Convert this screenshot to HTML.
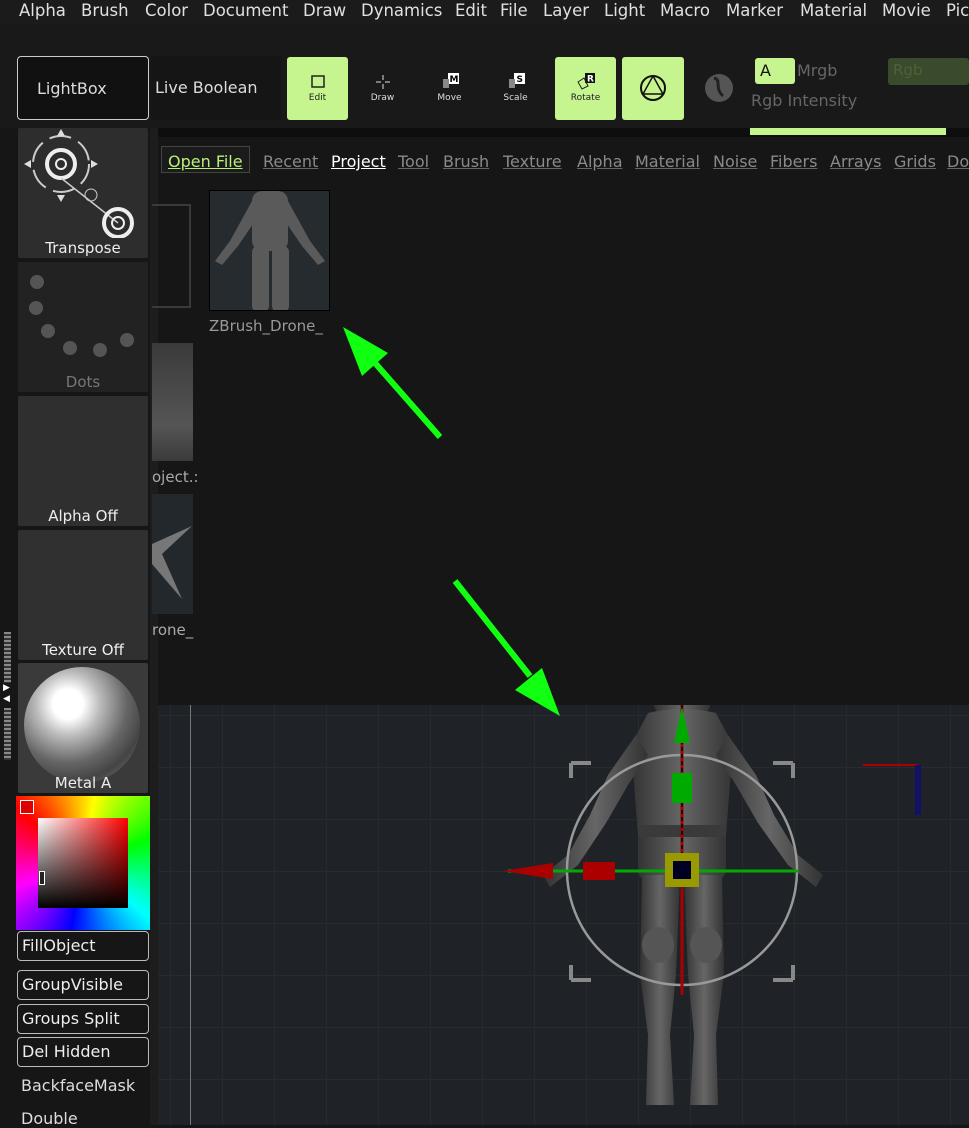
<!DOCTYPE html>
<html><head><style>
*{margin:0;padding:0;box-sizing:border-box}
body{width:969px;height:1125px;background:#161616;position:relative;overflow:hidden;font-family:"DejaVu Sans","Liberation Sans",sans-serif;color:#ddd}
.a{position:absolute}
.menu{top:0;left:0;width:969px;height:24px;background:#1b1b1b}
.menu span{position:absolute;top:1px;font-size:16.5px;color:#e0e0e0;white-space:nowrap}
.g{background:#c6f48e;border-radius:3px}
.tile{background:#2b2b2b;border-radius:2px;text-align:center;font-size:15px;color:#eee}
.tile span{position:absolute;bottom:1px;left:0;right:0}
.btn{left:17px;width:132px;height:30px;border:1px solid #bbb;border-radius:4px;background:#161616;font-size:16px;padding:4px 4px;color:#eee}
.tab{position:absolute;top:152px;font-size:16px;color:#8a8a8a;text-decoration:underline;text-decoration-color:#666}
.ic{font-size:9px;color:#222;text-align:center}
</style></head><body>
<div class="a menu">
<span style="left:19px">Alpha</span><span style="left:81px">Brush</span><span style="left:145px">Color</span><span style="left:203px">Document</span><span style="left:303px">Draw</span><span style="left:361px">Dynamics</span><span style="left:455px">Edit</span><span style="left:500px">File</span><span style="left:543px">Layer</span><span style="left:604px">Light</span><span style="left:660px">Macro</span><span style="left:726px">Marker</span><span style="left:800px">Material</span><span style="left:882px">Movie</span><span style="left:946px">Pic</span>
</div>
<div class="a" style="top:24px;left:0;width:969px;height:104px;background:#191919"></div>
<div class="a" style="left:17px;top:56px;width:132px;height:64px;border:1px solid #ccc;border-radius:4px;background:#111;font-size:16px;padding-top:22px;padding-left:19px">LightBox</div>
<div class="a" style="left:151px;top:56px;width:130px;height:64px;background:#151515;font-size:16px;padding:22px 4px">Live Boolean</div>
<div class="a g" style="left:287px;top:57px;width:61px;height:63px"></div>
<div class="a ic" style="left:287px;top:74px;width:61px"><svg width="20" height="16"><rect x="4" y="2" width="12" height="11" fill="none" stroke="#222" stroke-width="1.5"/></svg><br>Edit</div>
<div class="a ic" style="left:360px;top:74px;width:45px;color:#ddd"><svg width="20" height="16"><path d="M10 1v5M10 10v5M3 8h5M12 8h5" stroke="#ddd"/></svg><br>Draw</div>
<div class="a ic" style="left:427px;top:72px;width:45px;color:#ddd"><svg width="20" height="18"><rect x="8" y="1" width="11" height="11" fill="#fff"/><text x="9.5" y="10" font-size="9" fill="#000" font-weight="bold">M</text><rect x="3" y="7" width="6" height="9" fill="#888"/></svg><br>Move</div>
<div class="a ic" style="left:493px;top:72px;width:45px;color:#ddd"><svg width="20" height="18"><rect x="8" y="1" width="11" height="11" fill="#fff"/><text x="10.5" y="10" font-size="9" fill="#000" font-weight="bold">S</text><rect x="3" y="7" width="6" height="9" fill="#888"/></svg><br>Scale</div>
<div class="a g" style="left:555px;top:57px;width:61px;height:63px"></div>
<div class="a ic" style="left:555px;top:72px;width:61px"><svg width="22" height="18"><rect x="10" y="1" width="10" height="10" fill="#111"/><text x="12" y="9.5" font-size="9" fill="#fff" font-weight="bold">R</text><path d="M3 10l6-4 4 8-6 3z" fill="none" stroke="#222"/></svg><br>Rotate</div>
<div class="a g" style="left:622px;top:57px;width:62px;height:63px"></div>
<svg class="a" style="left:638px;top:73px" width="30" height="30"><circle cx="15" cy="15" r="12" fill="none" stroke="#111" stroke-width="2"/><path d="M15 3L25 21H5z" fill="none" stroke="#111" stroke-width="1.5"/></svg>
<svg class="a" style="left:704px;top:73px" width="30" height="30"><circle cx="15" cy="15" r="14" fill="#555"/><path d="M10 5c8 2 0 10 9 18" stroke="#222" stroke-width="3" fill="none"/></svg>
<div class="a g" style="left:755px;top:58px;width:40px;height:26px;color:#111;font-size:16px;padding:3px 5px">A</div>
<div class="a" style="left:797px;top:61px;font-size:16px;color:#666">Mrgb</div>
<div class="a" style="left:751px;top:91px;font-size:16px;color:#666">Rgb Intensity</div>
<div class="a" style="left:888px;top:58px;width:81px;height:27px;background:#3a4a2c;border-radius:3px;color:#4e6235;font-size:15px;padding:3px 5px">Rgb</div>
<div class="a" style="left:156px;top:128px;width:813px;height:9px;background:#0e0e0e"></div>
<div class="a" style="left:750px;top:128px;width:196px;height:7px;background:#c6f48e"></div>
<!-- left tiles -->
<div class="a tile" style="left:18px;top:128px;width:130px;height:130px;background:#2d2d2d"><svg width="130" height="110"><circle cx="43" cy="36" r="28" fill="none" stroke="#ccc" stroke-width="2" stroke-dasharray="22 8"/><circle cx="43" cy="36" r="14" fill="none" stroke="#eee" stroke-width="4"/><circle cx="43" cy="36" r="5" fill="none" stroke="#eee" stroke-width="2"/><path d="M43 50L100 95" stroke="#ccc" stroke-width="1.5"/><circle cx="100" cy="95" r="14" fill="none" stroke="#eee" stroke-width="4"/><circle cx="100" cy="95" r="6" fill="none" stroke="#eee" stroke-width="2"/><circle cx="73" cy="67" r="6" fill="none" stroke="#ccc"/><path d="M43 1l-4 7h8zM43 74l-4-7h8zM6 36l7-4v8zM80 36l-7-4v8z" fill="#ddd"/></svg><span>Transpose</span></div>
<div class="a tile" style="left:18px;top:262px;width:130px;height:130px;background:#222;color:#777"><svg width="130" height="100"><g fill="#555"><circle cx="19" cy="20" r="7"/><circle cx="18" cy="46" r="7"/><circle cx="30" cy="69" r="7"/><circle cx="52" cy="86" r="7"/><circle cx="82" cy="88" r="7"/><circle cx="109" cy="78" r="7"/></g></svg><span>Dots</span></div>
<div class="a tile" style="left:18px;top:396px;width:130px;height:130px;background:#2f2f2f"><span>Alpha Off</span></div>
<div class="a tile" style="left:18px;top:530px;width:130px;height:130px;background:#303030"><span>Texture Off</span></div>
<div class="a tile" style="left:18px;top:663px;width:130px;height:130px;background:#3a3a3a;overflow:hidden"><div class="a" style="left:6px;top:4px;width:116px;height:116px;border-radius:50%;background:radial-gradient(circle at 38% 32%,#fff 0,#fff 14%,#bbb 30%,#666 55%,#444 72%,#888 100%)"></div><span>Metal A</span></div>
<!-- side strip -->
<div class="a" style="left:4px;top:632px;width:7px;height:128px;background:repeating-linear-gradient(#888 0 2px,#333 2px 4px)"></div>
<div class="a" style="left:3px;top:683px;width:9px;height:25px;background:#161616;color:#fff;font-size:9px;line-height:11px">▶<br>◀</div>
<!-- color picker -->
<div class="a" style="left:16px;top:796px;width:134px;height:134px;background:conic-gradient(from 10deg,#ff0 0deg,#0f0 60deg,#0ff 120deg,#00f 180deg,#f0f 240deg,#f00 300deg,#fa0 340deg,#ff0 360deg)"></div>
<div class="a" style="left:38px;top:818px;width:90px;height:90px;background:linear-gradient(to bottom,transparent,#000),linear-gradient(to right,#fff,#f00)"></div>
<div class="a" style="left:20px;top:800px;width:14px;height:14px;border:1px solid #fff;background:#d00"></div>
<div class="a" style="left:39px;top:871px;width:6px;height:14px;border:1px solid #fff;background:#222"></div>
<div class="a btn" style="top:931px">FillObject</div>
<div class="a btn" style="top:970px">GroupVisible</div>
<div class="a btn" style="top:1004px">Groups Split</div>
<div class="a btn" style="top:1037px">Del Hidden</div>
<div class="a" style="left:21px;top:1076px;font-size:16px">BackfaceMask</div>
<div class="a" style="left:21px;top:1109px;font-size:16px">Double</div>
<div class="a" style="left:150px;top:128px;width:8px;height:997px;background:#1d1d1d"></div>
<!-- tabs -->
<div class="a" style="left:161px;top:146px;width:89px;height:27px;border:1px solid #444;background:#1b1b1b"></div>
<div class="tab" style="left:168px;color:#b8f07a;text-decoration-color:#b8f07a">Open File</div>
<div class="tab" style="left:263px">Recent</div>
<div class="tab" style="left:331px;color:#fff;text-decoration-color:#fff">Project</div>
<div class="tab" style="left:398px">Tool</div>
<div class="tab" style="left:443px">Brush</div>
<div class="tab" style="left:503px">Texture</div>
<div class="tab" style="left:577px">Alpha</div>
<div class="tab" style="left:635px">Material</div>
<div class="tab" style="left:713px">Noise</div>
<div class="tab" style="left:770px">Fibers</div>
<div class="tab" style="left:830px">Arrays</div>
<div class="tab" style="left:894px">Grids</div>
<div class="tab" style="left:947px">Do</div>
<!-- lightbox items -->
<div class="a" style="left:152px;top:204px;width:39px;height:104px;border:2px solid #3a3a3a;border-left:none"></div>
<div class="a" style="left:152px;top:343px;width:41px;height:118px;background:linear-gradient(#3a3a3a,#555 70%,#3a3a3a)"></div>
<div class="a" style="left:152px;top:468px;font-size:15px;color:#aaa">oject.:</div>
<div class="a" style="left:152px;top:494px;width:41px;height:120px;background:#23282c"></div>
<svg class="a" style="left:152px;top:494px" width="41" height="120"><path d="M0 50L40 32 10 60 30 105 0 70z" fill="#777"/></svg>
<div class="a" style="left:152px;top:621px;font-size:15px;color:#aaa">rone_</div>
<div class="a" style="left:209px;top:190px;width:121px;height:121px;background:#262b30;border:1px solid #000;overflow:hidden">
<svg width="121" height="121"><g fill="#5a5a5a"><rect x="42" y="0" width="36" height="60" rx="10"/><path d="M42 10L20 50 5 70 12 74 28 55 45 30zM78 10L100 50 115 70 108 74 92 55 75 30z"/><rect x="42" y="55" width="17" height="66" rx="6"/><rect x="62" y="55" width="17" height="66" rx="6"/></g></svg></div>
<div class="a" style="left:209px;top:317px;font-size:15px;color:#999">ZBrush_Drone_</div>
<!-- viewport -->
<div class="a" style="left:158px;top:705px;width:811px;height:420px;background-color:#1f2327;background-image:linear-gradient(90deg,#262b30 1px,transparent 1px),linear-gradient(#262b30 1px,transparent 1px);background-size:52px 52px;background-position:12px 10px"></div>
<div class="a" style="left:190px;top:705px;width:1px;height:420px;background:#777"></div>
<svg class="a" style="left:158px;top:705px" width="811" height="420">
<defs><linearGradient id="b" x1="0" x2="1"><stop offset="0" stop-color="#333"/><stop offset=".5" stop-color="#666"/><stop offset="1" stop-color="#333"/></linearGradient></defs>
<g fill="url(#b)">
<ellipse cx="524" cy="0" rx="28" ry="14"/>
<path d="M490 8Q524 0 558 8L575 40 568 130 480 130 473 40z"/>
<path d="M478 30L450 70 432 110 410 150 385 170 392 182 420 160 448 118 470 80 490 50z"/>
<path d="M570 30L598 70 616 110 640 150 665 170 658 182 630 160 600 118 578 80 558 50z"/>
<rect x="480" y="120" width="88" height="55" rx="10"/>
<path d="M484 170h38l-4 100-6 60 4 70h-28l2-70-8-60z"/>
<path d="M526 170h38l2 100-8 60 2 70h-28l4-70-6-60z"/>
</g>
<rect x="480" y="120" width="88" height="12" fill="#3a3a3a"/>
<ellipse cx="500" cy="240" rx="16" ry="18" fill="#555"/><ellipse cx="548" cy="240" rx="16" ry="18" fill="#555"/>
<circle cx="524" cy="165" r="115" fill="none" stroke="#999" stroke-width="2.5"/>
<path d="M524 0V290" stroke="#a00" stroke-width="3"/>
<path d="M524 0V150" stroke="#111" stroke-width="2" stroke-dasharray="4 3"/>
<path d="M350 166H640" stroke="#0a0" stroke-width="3"/>
<path d="M345 166l50-8v16z" fill="#a00"/><rect x="425" y="157" width="32" height="18" fill="#a00"/>
<rect x="514" y="68" width="20" height="30" fill="#0a0"/><path d="M524 2l-8 36h16z" fill="#0a0"/>
<rect x="507" y="148" width="34" height="34" fill="#990" /><rect x="515" y="156" width="18" height="18" fill="#002"/>
<path d="M413 58h20M413 58v15M635 58h-20M635 58v15M413 275h20M413 275v-15M635 275h-20M635 275v-15" stroke="#888" stroke-width="4"/>
<path d="M705 60h55" stroke="#a00" stroke-width="2"/><rect x="757" y="60" width="6" height="50" fill="#116"/>
</svg>
<!-- arrows -->
<svg class="a" style="left:0;top:0" width="969" height="1125">
<path d="M440 437L368 355" stroke="#1f1" stroke-width="6"/><path d="M343 327L388 353 362 376z" fill="#1f1"/>
<path d="M455 581L530 676" stroke="#1f1" stroke-width="6"/><path d="M560 716L515 690 542 668z" fill="#1f1"/>
</svg>
</body></html>
